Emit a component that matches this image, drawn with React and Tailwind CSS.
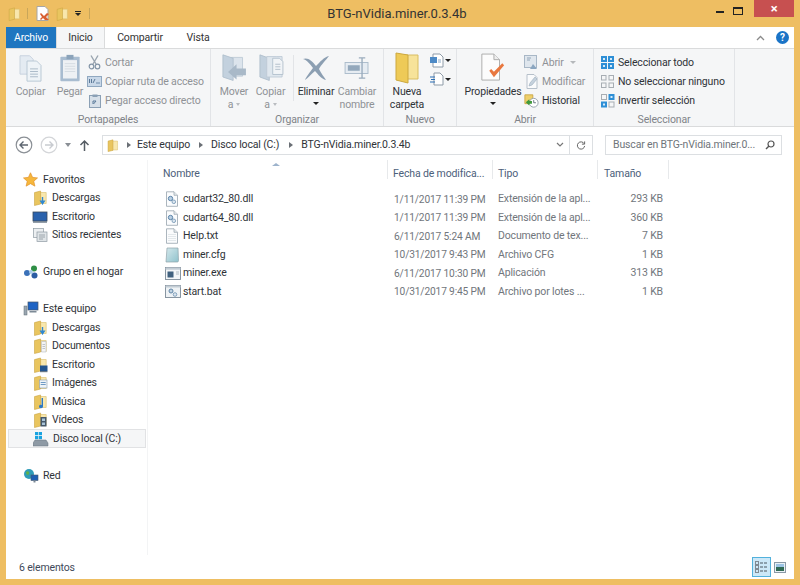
import React from "react";

const FONT = "[font-family:Roboto,'Noto_Sans',sans-serif] tracking-[-0.15px]";

function SpineFolder({ size = 16, children }) {
  return (
    <svg width={size} height={size} viewBox="0 0 16 16" className="shrink-0">
      <path d="M8 2.5h6.2v11H8z" fill="#f8e7ad" stroke="#d9bd6c" strokeWidth=".6" />
      <path d="M2.5 2.6 8.6 1v13l-6.100 1.500z" fill="#e9c55f" stroke="#c9a443" strokeWidth=".6" />
      {children}
    </svg>
  );
}

const Down = () => <path d="M11.200 7v3.500h2.300L10.500 15l-3-4.500h2.300V7z" fill="#2f87d0" />;
const DocOver = () => (
  <>
    <path d="M9.500 3.500h4.500v10.500H9.500z" fill="#f4f4f4" stroke="#aab0b8" strokeWidth=".5" />
    <path d="M10.500 6.500h2.500M10.500 8.500h2.500M10.500 10.500h2.500" stroke="#9aa3ad" strokeWidth=".6" />
  </>
);
const DeskOver = () => (
  <>
    <rect x="8" y="8.500" width="7.500" height="5.500" fill="#22558f" />
    <rect x="8" y="14" width="7.500" height="1.200" fill="#667788" />
  </>
);
const PicOver = () => (
  <>
    <rect x="7.500" y="5" width="7.500" height="8" fill="#eef3f7" stroke="#8b9eaf" strokeWidth=".6" />
    <path d="M8.700 7.500h5M8.700 9.500h5" stroke="#6f9ac4" strokeWidth="1" />
  </>
);
const MusicOver = () => <path d="M11 4v8.500a2 1.700 0 1 1-1.400-1.500V4z" fill="#2c78c4" />;
const FilmOver = () => (
  <>
    <rect x="8.500" y="5" width="6" height="9.500" fill="#45586b" />
    <rect x="10" y="6.500" width="3" height="2.500" fill="#a9c4d8" />
    <rect x="10" y="10.500" width="3" height="2.500" fill="#a9c4d8" />
  </>
);

function Star() {
  return (
    <svg width="15" height="15" viewBox="0 0 16 16" className="shrink-0">
      <path d="m8 .8 2.200 4.900 5.300.6-4 3.500 1.200 5.300L8 12.400l-4.700 2.700 1.200-5.300-4-3.500 5.300-.6z" fill="#f6b73c" stroke="#e08f2a" strokeWidth=".7" />
    </svg>
  );
}
function Monitor() {
  return (
    <svg width="16" height="16" viewBox="0 0 16 16" className="shrink-0">
      <rect x="1" y="3" width="14" height="9" fill="#2a62ad" stroke="#3b4a5c" strokeWidth=".8" />
      <rect x="1" y="12" width="14" height="1.800" fill="#7a8794" />
    </svg>
  );
}
function Recent() {
  return (
    <svg width="16" height="16" viewBox="0 0 16 16" className="shrink-0">
      <rect x="1.500" y="1.500" width="10" height="9" fill="#eceff1" stroke="#8f9aa3" strokeWidth=".7" />
      <rect x="5" y="5" width="10" height="9.500" fill="#dfe4e7" stroke="#8f9aa3" strokeWidth=".7" />
      <path d="M7 8h6M7 10h6M7 12h4" stroke="#8a96a0" strokeWidth=".8" />
    </svg>
  );
}
function Homegroup() {
  return (
    <svg width="16" height="16" viewBox="0 0 16 16" className="shrink-0">
      <circle cx="4" cy="9" r="3" fill="#3b71b8" />
      <circle cx="11" cy="4.500" r="3" fill="#2f8f46" />
      <circle cx="11.500" cy="11.500" r="3" fill="#2b5ca3" />
      <circle cx="8" cy="8" r="2" fill="#a9cdea" />
    </svg>
  );
}
function PC() {
  return (
    <svg width="16" height="16" viewBox="0 0 16 16" className="shrink-0">
      <rect x="5" y="1" width="10" height="8" fill="#1e63c4" stroke="#46576a" strokeWidth=".7" />
      <rect x="6.500" y="10" width="7" height="1.500" fill="#7d8a96" />
      <rect x="1" y="5" width="3" height="9" fill="#9aa6b0" stroke="#5e6b76" strokeWidth=".5" />
    </svg>
  );
}
function Drive() {
  return (
    <svg width="16" height="16" viewBox="0 0 16 16" className="shrink-0">
      <rect x="2" y="1" width="3.200" height="3.200" fill="#19a3e0" />
      <rect x="5.800" y="1" width="3.200" height="3.200" fill="#19a3e0" />
      <rect x="2" y="5" width="3.200" height="3.200" fill="#19a3e0" />
      <rect x="5.800" y="5" width="3.200" height="3.200" fill="#19a3e0" />
      <path d="M2 9h11l2 3v3H0v-3z" fill="#8e9aa5" stroke="#66727d" strokeWidth=".5" />
    </svg>
  );
}
function Network() {
  return (
    <svg width="16" height="16" viewBox="0 0 16 16" className="shrink-0">
      <circle cx="6" cy="6" r="5" fill="#2f9cb8" />
      <path d="M3 4c2-2 4 0 3 2S3 7 3 4z" fill="#5fb04a" />
      <rect x="8" y="7" width="7" height="5.500" fill="#1e5fb3" stroke="#46576a" strokeWidth=".6" />
      <rect x="10.500" y="12.500" width="2" height="2" fill="#7d8a96" />
    </svg>
  );
}

function PageIcon({ children }) {
  return (
    <svg width="14" height="16" viewBox="0 0 14 16" className="shrink-0">
      <path d="M1.500 .8h7.500l3.500 3.500v11h-11z" fill="#fbfcfd" stroke="#97a3ad" strokeWidth=".8" />
      <path d="M9 .8v3.500h3.500" fill="#e4e8eb" stroke="#97a3ad" strokeWidth=".7" />
      {children}
    </svg>
  );
}
const Dll = () => (
  <PageIcon>
    <circle cx="5.500" cy="7.500" r="2.200" fill="#b9cfe2" stroke="#4f7ba3" strokeWidth=".9" />
    <circle cx="8.800" cy="10.800" r="1.800" fill="#dbe6ef" stroke="#6c8faf" strokeWidth=".8" />
  </PageIcon>
);
const Txt = () => (
  <PageIcon>
    <path d="M3 6.500h8M3 8.500h8M3 10.500h8M3 12.500h8" stroke="#dde2e6" strokeWidth=".8" />
  </PageIcon>
);
const Cfg = () => (
  <svg width="15" height="16" viewBox="0 0 15 16" className="shrink-0">
    <defs>
      <linearGradient id="cfgg" x1="0" y1="0" x2="1" y2="1">
        <stop offset="0" stopColor="#d5e8ec" />
        <stop offset="1" stopColor="#8fc2cc" />
      </linearGradient>
    </defs>
    <path d="M2 1h11l.5 12.500c0 1-.500 1.500-1.500 1.500H1z" fill="url(#cfgg)" stroke="#90a3ab" strokeWidth=".7" />
  </svg>
);
const Exe = () => (
  <svg width="16" height="15" viewBox="0 0 16 15" className="shrink-0">
    <rect x=".5" y="1.500" width="15" height="12" fill="#f3f6f8" stroke="#7c8b98" strokeWidth=".9" />
    <rect x=".5" y="1.500" width="15" height="2.200" fill="#c2ccd4" />
    <rect x="2.500" y="5.500" width="6" height="6" fill="#41617f" />
    <path d="M11 6h3M11 8h3" stroke="#aab4bd" strokeWidth=".9" />
  </svg>
);
const Bat = () => (
  <svg width="16" height="15" viewBox="0 0 16 15" className="shrink-0">
    <rect x=".5" y="1.500" width="15" height="12" fill="#eef2f5" stroke="#7c8b98" strokeWidth=".9" />
    <rect x=".5" y="1.500" width="15" height="2" fill="#c2ccd4" />
    <circle cx="6" cy="7" r="2" fill="#c0d2e1" stroke="#557c9f" strokeWidth=".9" />
    <circle cx="10" cy="10.500" r="1.800" fill="#dbe6ef" stroke="#6c8faf" strokeWidth=".8" />
  </svg>
);

const navGroups = [
  { el: <Star />, label: "Favoritos", lvl: 0 },
  { el: <SpineFolder><Down /></SpineFolder>, label: "Descargas", lvl: 1 },
  { el: <Monitor />, label: "Escritorio", lvl: 1 },
  { el: <Recent />, label: "Sitios recientes", lvl: 1 },
  null,
  { el: <Homegroup />, label: "Grupo en el hogar", lvl: 0 },
  null,
  { el: <PC />, label: "Este equipo", lvl: 0 },
  { el: <SpineFolder><Down /></SpineFolder>, label: "Descargas", lvl: 1 },
  { el: <SpineFolder><DocOver /></SpineFolder>, label: "Documentos", lvl: 1 },
  { el: <SpineFolder><DeskOver /></SpineFolder>, label: "Escritorio", lvl: 1 },
  { el: <SpineFolder><PicOver /></SpineFolder>, label: "Imágenes", lvl: 1 },
  { el: <SpineFolder><MusicOver /></SpineFolder>, label: "Música", lvl: 1 },
  { el: <SpineFolder><FilmOver /></SpineFolder>, label: "Vídeos", lvl: 1 },
  { el: <Drive />, label: "Disco local (C:)", lvl: 1, sel: true },
  null,
  { el: <Network />, label: "Red", lvl: 0 },
];

const files = [
  [<Dll />, "cudart32_80.dll", "1/11/2017 11:39 PM", "Extensión de la apl...", "293 KB"],
  [<Dll />, "cudart64_80.dll", "1/11/2017 11:39 PM", "Extensión de la apl...", "360 KB"],
  [<Txt />, "Help.txt", "6/11/2017 5:24 AM", "Documento de tex...", "7 KB"],
  [<Cfg />, "miner.cfg", "10/31/2017 9:43 PM", "Archivo CFG", "1 KB"],
  [<Exe />, "miner.exe", "6/11/2017 10:30 PM", "Aplicación", "313 KB"],
  [<Bat />, "start.bat", "10/31/2017 9:45 PM", "Archivo por lotes ...", "1 KB"],
];

function Group({ className, label, children }) {
  return (
    <div className={`flex flex-col border-r border-[#e2e4e7] ${className}`}>
      <div className="flex min-h-0 flex-1 pt-[3px]">{children}</div>
      <div className="h-[12px] text-center text-[10.500px] leading-[12px] text-[#7f8388]">{label}</div>
    </div>
  );
}

function Big({ className = "", icon, lines, muted = true, caret }) {
  return (
    <div className={`flex flex-col items-center ${className}`}>
      <div className="flex h-[32px] items-center justify-center">{icon}</div>
      <div className={`mt-[2px] text-center text-[10.500px] leading-[12.500px] whitespace-nowrap ${muted ? "text-[#8f9296]" : "text-[#2f3338]"}`}>
        {lines.map((l, i) => (
          <div key={i}>{l}</div>
        ))}
        {caret && (
          <div className="flex justify-center pt-[3px]">
            <div className="h-0 w-0 border-x-[3px] border-t-[3px] border-x-transparent border-t-[#222]" />
          </div>
        )}
      </div>
    </div>
  );
}

function Small({ icon, label, muted = true, caret }) {
  return (
    <div className={`flex h-[19.300px] items-center gap-[3px] text-[10.500px] whitespace-nowrap ${muted ? "text-[#8f9296]" : "text-[#2f3338]"}`}>
      <span className="flex w-[15px] justify-center">{icon}</span>
      <span>{label}</span>
      {caret && <span className="ml-[3px] h-0 w-0 border-x-[3px] border-t-[3px] border-x-transparent border-t-[#b5b8bb]" />}
    </div>
  );
}

const ClipCopy = () => (
  <svg width="25" height="28" viewBox="0 0 28 32">
    <path d="M2 2h11l4 4v17H2z" fill="#e4ebf2" stroke="#c3cfdb" />
    <path d="M10 8h11l5 5v18H10z" fill="#eef3f7" stroke="#b4c3d1" />
    <path d="M13.500 17h9M13.500 20h9M13.500 23h9M13.500 26h9" stroke="#a4b4c3" />
  </svg>
);
const Paste = () => (
  <svg width="22" height="28" viewBox="0 0 24 32">
    <rect x="1" y="3" width="22" height="28" rx="1" fill="#a8bcd0" />
    <rect x="4" y="7" width="16" height="21" fill="#eef1f4" />
    <path d="M6 11h12M6 14h12M6 17h12M6 20h12" stroke="#d2d9e0" />
    <rect x="8" y="1" width="8" height="5" fill="#8ba3ba" />
  </svg>
);
const Scissors = () => (
  <svg width="13" height="15" viewBox="0 0 13 15">
    <path d="M3 0.500 8 9M10 .5 5 9" stroke="#9aa5b0" strokeWidth="1.400" fill="none" />
    <circle cx="3.500" cy="11.500" r="2.300" fill="none" stroke="#8294a6" strokeWidth="1.200" />
    <circle cx="9.500" cy="11.500" r="2.300" fill="none" stroke="#8294a6" strokeWidth="1.200" />
  </svg>
);
const CopyPath = () => (
  <svg width="15" height="11" viewBox="0 0 15 11">
    <rect x=".5" y=".5" width="14" height="10" fill="#c9d8e8" stroke="#90a8c0" />
    <path d="M2.500 3v4M4.500 3v4M6 7l2-4" stroke="#4f6f90" strokeWidth=".9" />
    <path d="M9 7h4" stroke="#6f8cab" />
  </svg>
);
const PasteShort = () => (
  <svg width="12" height="14" viewBox="0 0 12 14">
    <rect x=".5" y="1.500" width="11" height="12" fill="#d7e0e9" stroke="#8ba0b5" />
    <rect x="3.500" y=".5" width="5" height="2.500" fill="#8ba0b5" />
    <path d="M4 10V7h3M7 7 4.500 10" stroke="#5a7a9a" fill="none" />
  </svg>
);
const MoveTo = () => (
  <svg width="26" height="29" viewBox="0 0 30 34">
    <path d="M12 4h13v22H12z" fill="#dce4ec" stroke="#bcc9d5" />
    <path d="M2 1 14 5v26L2 27z" fill="#c3d1de" stroke="#aebdcb" />
    <path d="M29 17v8H18v5L8 21l10-9v5z" fill="#a9b9c8" />
  </svg>
);
const CopyTo = () => (
  <svg width="26" height="29" viewBox="0 0 30 34">
    <path d="M2 1 13 5v26L2 27z" fill="#c3d1de" stroke="#aebdcb" />
    <path d="M10 3h11l7 0v24H10z" fill="#dfe7ee" stroke="#bcc9d5" />
    <path d="M17 5h8l4 4v15H17z" fill="#f1f4f7" stroke="#afbdca" />
    <path d="M20 12h6M20 15h6M20 18h6" stroke="#a9b7c4" />
  </svg>
);
const XDel = () => (
  <svg width="28" height="26" viewBox="0 0 28 26">
    <path d="M1 4c5-2 9 2 13 7 4-4 8-9 13-10-3 4-8 9-10 13 2 4 5 8 7 11-5-1-8-6-11-9-4 3-7 7-10 9 1-3 5-8 8-12C8 9 5 5 1 4z" fill="#8c9fb2" />
  </svg>
);
const Rename = () => (
  <svg width="26" height="22" viewBox="0 0 28 24">
    <rect x="1" y="6" width="25" height="12" fill="#e6ecf2" stroke="#a9bac9" />
    <rect x="4" y="9" width="13" height="6" fill="#93a8bc" />
    <path d="M16 1h7M16 23h7M19.500 1v22" stroke="#9aacbd" strokeWidth="1.500" />
  </svg>
);
const BigFolder = () => (
  <svg width="24" height="32" viewBox="0 0 24 32">
    <path d="M8 3h15v24H8z" fill="#f7e39a" stroke="#d8bd62" />
    <path d="M1 1 13 3v28L1 28z" fill="#eeca57" stroke="#cca83f" />
  </svg>
);
const NewItem = () => (
  <svg width="14" height="15" viewBox="0 0 14 15">
    <path d="M3 1h7l3 3v10H3z" fill="#fff" stroke="#8e9ba8" />
    <rect x="0" y="4" width="7" height="6" fill="#4d8ac6" />
    <path d="M8 7h3M8 9h3" stroke="#8aa9c7" />
  </svg>
);
const EasyAccess = () => (
  <svg width="14" height="14" viewBox="0 0 14 14">
    <path d="M4 1h6l3 3v9H4z" fill="#fff" stroke="#8e9ba8" />
    <path d="M0 5h5M1 7.500h4M0 10h5" stroke="#2b6fb5" strokeWidth="1.100" />
  </svg>
);
const Caret = () => <span className="ml-[1px] block h-0 w-0 border-x-[3px] border-t-[3px] border-x-transparent border-t-[#222]" />;
const Props = () => (
  <svg width="26" height="30" viewBox="0 0 28 32">
    <path d="M2 1h13l6 6v22H2z" fill="#fcfcfc" stroke="#a9a9a9" />
    <path d="M15 1v6h6" fill="#eee" stroke="#a9a9a9" />
    <path d="m10 19 5 7 11-13-2-2-9 9-3-3z" fill="#e8773f" />
  </svg>
);
const OpenI = () => (
  <svg width="15" height="15" viewBox="0 0 15 15">
    <rect x=".5" y=".5" width="12" height="12" fill="#dfe6ed" stroke="#a8b7c6" />
    <path d="M3 3h4M3 5h3" stroke="#91a5b8" />
    <path d="m6 14 3-5 4 5z" fill="#8ba6c0" />
  </svg>
);
const Edit = () => (
  <svg width="14" height="15" viewBox="0 0 14 15">
    <path d="M2 .5h7l3 3v11H2z" fill="#fafbfc" stroke="#b6c0ca" />
    <path d="m4 12 1-3 5-6 2 2-5 6z" fill="#c6d2dd" stroke="#9bacbc" strokeWidth=".6" />
  </svg>
);
const History = () => (
  <svg width="17" height="16" viewBox="0 0 17 16">
    <path d="M1 1h9v10H1z" fill="#eecf6a" stroke="#c9a443" />
    <circle cx="11" cy="10" r="5" fill="#fff" stroke="#8f9ba6" />
    <path d="M11 7v3h2.500" stroke="#5d6a76" fill="none" />
    <path d="M2 9.500 6 6v2h3v3H6v2z" fill="#3f9a3a" />
  </svg>
);
const SelAll = () => (
  <svg width="13" height="13" viewBox="0 0 13 13">
    <rect x="0" y="0" width="6" height="6" fill="#2e8fd6" />
    <rect x="7" y="0" width="6" height="6" fill="#2e8fd6" />
    <rect x="0" y="7" width="6" height="6" fill="#2e8fd6" />
    <rect x="7" y="7" width="6" height="6" fill="#2e8fd6" />
    <rect x="2" y="2" width="2" height="2" fill="#d7ebf9" />
    <rect x="9" y="2" width="2" height="2" fill="#d7ebf9" />
    <rect x="2" y="9" width="2" height="2" fill="#d7ebf9" />
    <rect x="9" y="9" width="2" height="2" fill="#d7ebf9" />
  </svg>
);
const SelNone = () => (
  <svg width="13" height="13" viewBox="0 0 13 13" fill="none" stroke="#a7adb3">
    <rect x=".5" y=".5" width="4.500" height="4.500" />
    <rect x="8" y=".5" width="4.500" height="4.500" />
    <rect x=".5" y="8" width="4.500" height="4.500" />
    <rect x="8" y="8" width="4.500" height="4.500" />
  </svg>
);
const SelInv = () => (
  <svg width="14" height="14" viewBox="0 0 14 14">
    <rect x=".5" y=".5" width="5" height="5" fill="none" stroke="#a7adb3" />
    <rect x="7.500" y="0" width="6" height="6" fill="#2e8fd6" />
    <rect x="0" y="7.500" width="6" height="6" fill="#2e8fd6" />
    <rect x="8" y="8" width="5" height="5" fill="none" stroke="#a7adb3" />
    <rect x="9.500" y="2" width="2" height="2" fill="#d7ebf9" />
    <rect x="2" y="9.500" width="2" height="2" fill="#d7ebf9" />
  </svg>
);

function NavCircle({ dim }) {
  return (
    <svg width="18" height="18" viewBox="0 0 18 18" className="shrink-0">
      <circle cx="9" cy="9" r="7.800" fill="#fff" stroke={dim ? "#d3d5d8" : "#8a8f95"} strokeWidth="1.200" />
      <path d="M13 9H5.500M8.500 5.500 5 9l3.500 3.500" fill="none" stroke={dim ? "#c8cbd0" : "#5d6670"} strokeWidth="1.400" transform={dim ? "rotate(180 9 9)" : undefined} />
    </svg>
  );
}
const Crumb = () => <span className="block h-0 w-0 border-y-[3.500px] border-l-[4px] border-y-transparent border-l-[#6a6f75]" />;
const MiniA = () => (
  <span className="inline-flex items-center gap-[3px]">
    a<span className="block h-0 w-0 border-x-[2.500px] border-t-[3px] border-x-transparent border-t-[#b9bcc0]" />
  </span>
);

export default function App() {
  return (
    <div className={`flex h-[585px] w-[800px] flex-col overflow-hidden bg-[#eebe62] px-[6px] pb-[6px] ${FONT}`}>
      {/* Title bar */}
      <div className="flex h-[27px] shrink-0 items-center">
        <div className="flex items-center">
          <span className="ml-[1px]"><SpineFolder size={14} /></span>
          <span className="ml-[6px] h-[11px] w-px bg-[#c9a65a]" />
          <span className="ml-[8px]">
            <svg width="14" height="15" viewBox="0 0 14 15">
              <path d="M1 .5h8l3 3v11H1z" fill="#fff" stroke="#a6a6a6" />
              <path d="m5 7 3 3 3-3 2 1-3 3 3 3H9l-2-2-2 2-1-1 2-2-2-3z" fill="#d85f30" />
            </svg>
          </span>
          <span className="ml-[5px]"><SpineFolder size={14} /></span>
          <span className="ml-[4px] flex w-[10px] flex-col items-center gap-[1px]">
            <span className="h-px w-[6px] bg-[#222]" />
            <span className="h-0 w-0 border-x-[3px] border-t-[3px] border-x-transparent border-t-[#222]" />
          </span>
          <span className="ml-[6px] h-[11px] w-px bg-[#c9a65a]" />
        </div>
        <div className="flex-1 pr-[12px] text-center text-[13px] tracking-normal text-[#333]">BTG-nVidia.miner.0.3.4b</div>
        <div className="flex h-[27px] items-start">
          <div className="mr-[9px] mt-[11px] h-[2px] w-[8px] bg-[#222]" />
          <div className="mr-[11px] mt-[7px] h-[8px] w-[10px] border border-t-2 border-[#222]" />
          <div className="flex h-[17px] w-[40px] items-center justify-center bg-[#c75050] text-[13px] leading-none font-bold text-white">×</div>
        </div>
      </div>

      {/* Tabs */}
      <div className="flex h-[21px] shrink-0 items-stretch bg-white text-[10.500px]">
        <div className="flex w-[50px] items-center justify-center bg-[#1f76c0] text-white">Archivo</div>
        <div className="-mb-px flex w-[49px] items-center justify-center border-x border-[#dadbdc] bg-[#f5f6f7] text-[#333]">Inicio</div>
        <div className="flex w-[70px] items-center justify-center text-[#333]">Compartir</div>
        <div className="flex w-[46px] items-center justify-center text-[#333]">Vista</div>
        <div className="ml-auto flex items-center gap-[11px] pr-[5px]">
          <svg width="9" height="6" viewBox="0 0 9 6"><path d="m1 5 3.500-3.500L8 5" fill="none" stroke="#8a8a8a" strokeWidth="1.300" /></svg>
          <div className="flex h-[13px] w-[13px] items-center justify-center rounded-full bg-[#1a74c7] text-[10px] leading-none font-bold text-white">?</div>
        </div>
      </div>

      {/* Ribbon */}
      <div className="flex h-[79px] shrink-0 border-y border-[#dadbdc] bg-[#f5f6f7]">
        <Group className="w-[205px]" label="Portapapeles">
          <Big className="w-[49px]" icon={<ClipCopy />} lines={["Copiar"]} />
          <Big className="w-[30px]" icon={<Paste />} lines={["Pegar"]} />
          <div className="ml-[2px] flex flex-col pt-[1px]">
            <Small icon={<Scissors />} label="Cortar" />
            <Small icon={<CopyPath />} label="Copiar ruta de acceso" />
            <Small icon={<PasteShort />} label="Pegar acceso directo" />
          </div>
        </Group>
        <Group className="w-[173px]" label="Organizar">
          <Big className="ml-[3px] w-[40px]" icon={<MoveTo />} lines={["Mover", <MiniA key="a" />]} />
          <Big className="w-[33px]" icon={<CopyTo />} lines={["Copiar", <MiniA key="a" />]} />
          <div className="ml-[6px] mt-[3px] h-[46px] w-px bg-[#e2e4e7]" />
          <Big className="w-[44px]" icon={<XDel />} lines={["Eliminar"]} muted={false} caret />
          <Big className="w-[38px]" icon={<Rename />} lines={["Cambiar", "nombre"]} />
        </Group>
        <Group className="w-[73px]" label="Nuevo">
          <Big className="w-[46px]" icon={<BigFolder />} lines={["Nueva", "carpeta"]} muted={false} />
          <div className="flex flex-col gap-[4px] pt-[1px]">
            <div className="flex items-center"><NewItem /><Caret /></div>
            <div className="flex items-center"><EasyAccess /><Caret /></div>
          </div>
        </Group>
        <Group className="w-[137px]" label="Abrir">
          <Big className="ml-[8px] w-[56px]" icon={<Props />} lines={["Propiedades"]} muted={false} caret />
          <div className="ml-[3px] flex flex-col pt-[1px]">
            <Small icon={<OpenI />} label="Abrir" caret />
            <Small icon={<Edit />} label="Modificar" />
            <Small icon={<History />} label="Historial" muted={false} />
          </div>
        </Group>
        <Group className="w-[141px]" label="Seleccionar">
          <div className="ml-[6px] flex flex-col pt-[1px]">
            <Small icon={<SelAll />} label="Seleccionar todo" muted={false} />
            <Small icon={<SelNone />} label="No seleccionar ninguno" muted={false} />
            <Small icon={<SelInv />} label="Invertir selección" muted={false} />
          </div>
        </Group>
      </div>

      {/* Address bar */}
      <div className="flex h-[33px] shrink-0 items-center bg-white pt-[3px]">
        <div className="ml-[9px] flex w-[87px] items-center">
          <NavCircle />
          <span className="ml-[7px]"><NavCircle dim /></span>
          <span className="ml-[7px] h-0 w-0 border-x-[3.500px] border-t-[4px] border-x-transparent border-t-[#8a8f95]" />
          <svg className="ml-[8px]" width="11" height="13" viewBox="0 0 11 13"><path d="M5.500 12V2M1.500 6l4-4 4 4" fill="none" stroke="#555c63" strokeWidth="1.500" /></svg>
        </div>
        <div className="flex h-[20px] w-[491px] items-center border border-[#dcdfe2] text-[10.500px] text-[#2f3338]">
          <span className="ml-[3px]"><SpineFolder size={13} /></span>
          <span className="ml-[8px]"><Crumb /></span>
          <span className="ml-[6px]">Este equipo</span>
          <span className="ml-[9px]"><Crumb /></span>
          <span className="ml-[8px]">Disco local (C:)</span>
          <span className="ml-[10px]"><Crumb /></span>
          <span className="ml-[8px]">BTG-nVidia.miner.0.3.4b</span>
          <div className="ml-auto flex h-full items-center">
            <svg width="8" height="6" viewBox="0 0 8 6"><path d="m1 1 3 3 3-3" fill="none" stroke="#777" strokeWidth="1.200" /></svg>
            <span className="ml-[5px] h-full w-px bg-[#dcdfe2]" />
            <svg className="mx-[6px]" width="10" height="11" viewBox="0 0 11 11"><path d="M9 3.500A4 4 0 1 0 9.500 6M9.500 1v3H6.500" fill="none" stroke="#666" strokeWidth="1.100" /></svg>
          </div>
        </div>
        <div className="ml-[12px] flex h-[20px] w-[177px] items-center border border-[#dcdfe2] pl-[7px] text-[10.500px] whitespace-nowrap text-[#6f757b]">
          <span>Buscar en BTG-nVidia.miner.0...</span>
          <svg className="ml-auto mr-[6px]" width="10" height="10" viewBox="0 0 10 10"><circle cx="6" cy="4" r="3" fill="none" stroke="#555" strokeWidth="1.200" /><path d="M4 6 1 9" stroke="#555" strokeWidth="1.400" /></svg>
        </div>
      </div>

      {/* Main */}
      <div className="flex min-h-0 flex-1 bg-white">
        <nav className="h-full w-[142px] shrink-0 border-r border-[#f3f4f5] pt-[10.400px] pl-[2px] text-[10.500px] text-[#2f3338]">
          {navGroups.map((n, i) =>
            n === null ? (
              <div key={i} className="h-[18.500px]" />
            ) : (
              <div
                key={i}
                className={`flex h-[18.500px] items-center ${n.lvl ? "pl-[24px]" : "pl-[15px]"} ${n.sel ? "w-[138px] border border-[#e1e2e4] bg-[#f5f6f7]" : ""}`}
              >
                <span className="flex w-[20px] shrink-0">{n.el}</span>
                <span>{n.label}</span>
              </div>
            ),
          )}
        </nav>
        <div className="relative flex-1">
          <div className="absolute left-[124px] top-[3px] h-0 w-0 border-x-[4px] border-b-[3px] border-x-transparent border-b-[#9db3cc]" />
          <div className="flex h-[19px] text-[10.500px] leading-[27px] text-[#4c607a]">
            <div className="w-[240px] border-r border-[#e7e9eb] pl-[15px]">Nombre</div>
            <div className="w-[105px] border-r border-[#e7e9eb] pl-[5px] whitespace-nowrap">Fecha de modifica...</div>
            <div className="w-[105px] border-r border-[#e7e9eb] pl-[5px]">Tipo</div>
            <div className="w-[71px] border-r border-[#e7e9eb] pl-[6px]">Tamaño</div>
          </div>
          <div className="mt-[11px] text-[10.500px]">
            {files.map((f, i) => (
              <div key={i} className="flex h-[18.500px] items-center">
                <div className="flex w-[240px] items-center pl-[17px] text-[#2f3338]">
                  <span className="flex w-[18px] shrink-0 justify-start">{f[0]}</span>
                  <span>{f[1]}</span>
                </div>
                <div className="w-[105px] pl-[6px] text-[10.200px] whitespace-nowrap text-[#71767c]">{f[2]}</div>
                <div className="w-[105px] pl-[5px] whitespace-nowrap text-[#71767c]">{f[3]}</div>
                <div className="w-[65px] text-right text-[#71767c]">{f[4]}</div>
              </div>
            ))}
          </div>
        </div>
      </div>

      {/* Status bar */}
      <div className="flex h-[24px] shrink-0 items-center bg-white text-[10.500px] text-[#3f4a5a]">
        <span className="ml-[13px] pt-[2px]">6 elementos</span>
        <div className="ml-auto mr-[8px] flex items-center gap-[3px]">
          <div className="flex h-[20px] w-[19px] items-center justify-center border border-[#52b1dc] bg-[#cce8f8]">
            <svg width="13" height="12" viewBox="0 0 13 12">
              <rect x=".5" y=".5" width="3" height="3" fill="none" stroke="#7f8a94" />
              <rect x=".5" y="4.500" width="3" height="3" fill="none" stroke="#7f8a94" />
              <rect x=".5" y="8.500" width="3" height="3" fill="none" stroke="#7f8a94" />
              <path d="M5 2h3M9 2h3M5 6h3M9 6h3M5 10h3M9 10h3" stroke="#4d5862" strokeWidth="1" />
            </svg>
          </div>
          <svg width="12" height="11" viewBox="0 0 12 11">
            <rect x=".5" y=".5" width="11" height="10" fill="#eaf1f6" stroke="#8a99a6" />
            <rect x="2" y="5" width="8" height="4" fill="#2f6a54" />
            <rect x="2" y="2" width="8" height="3" fill="#9cc4e4" />
          </svg>
        </div>
      </div>
    </div>
  );
}
